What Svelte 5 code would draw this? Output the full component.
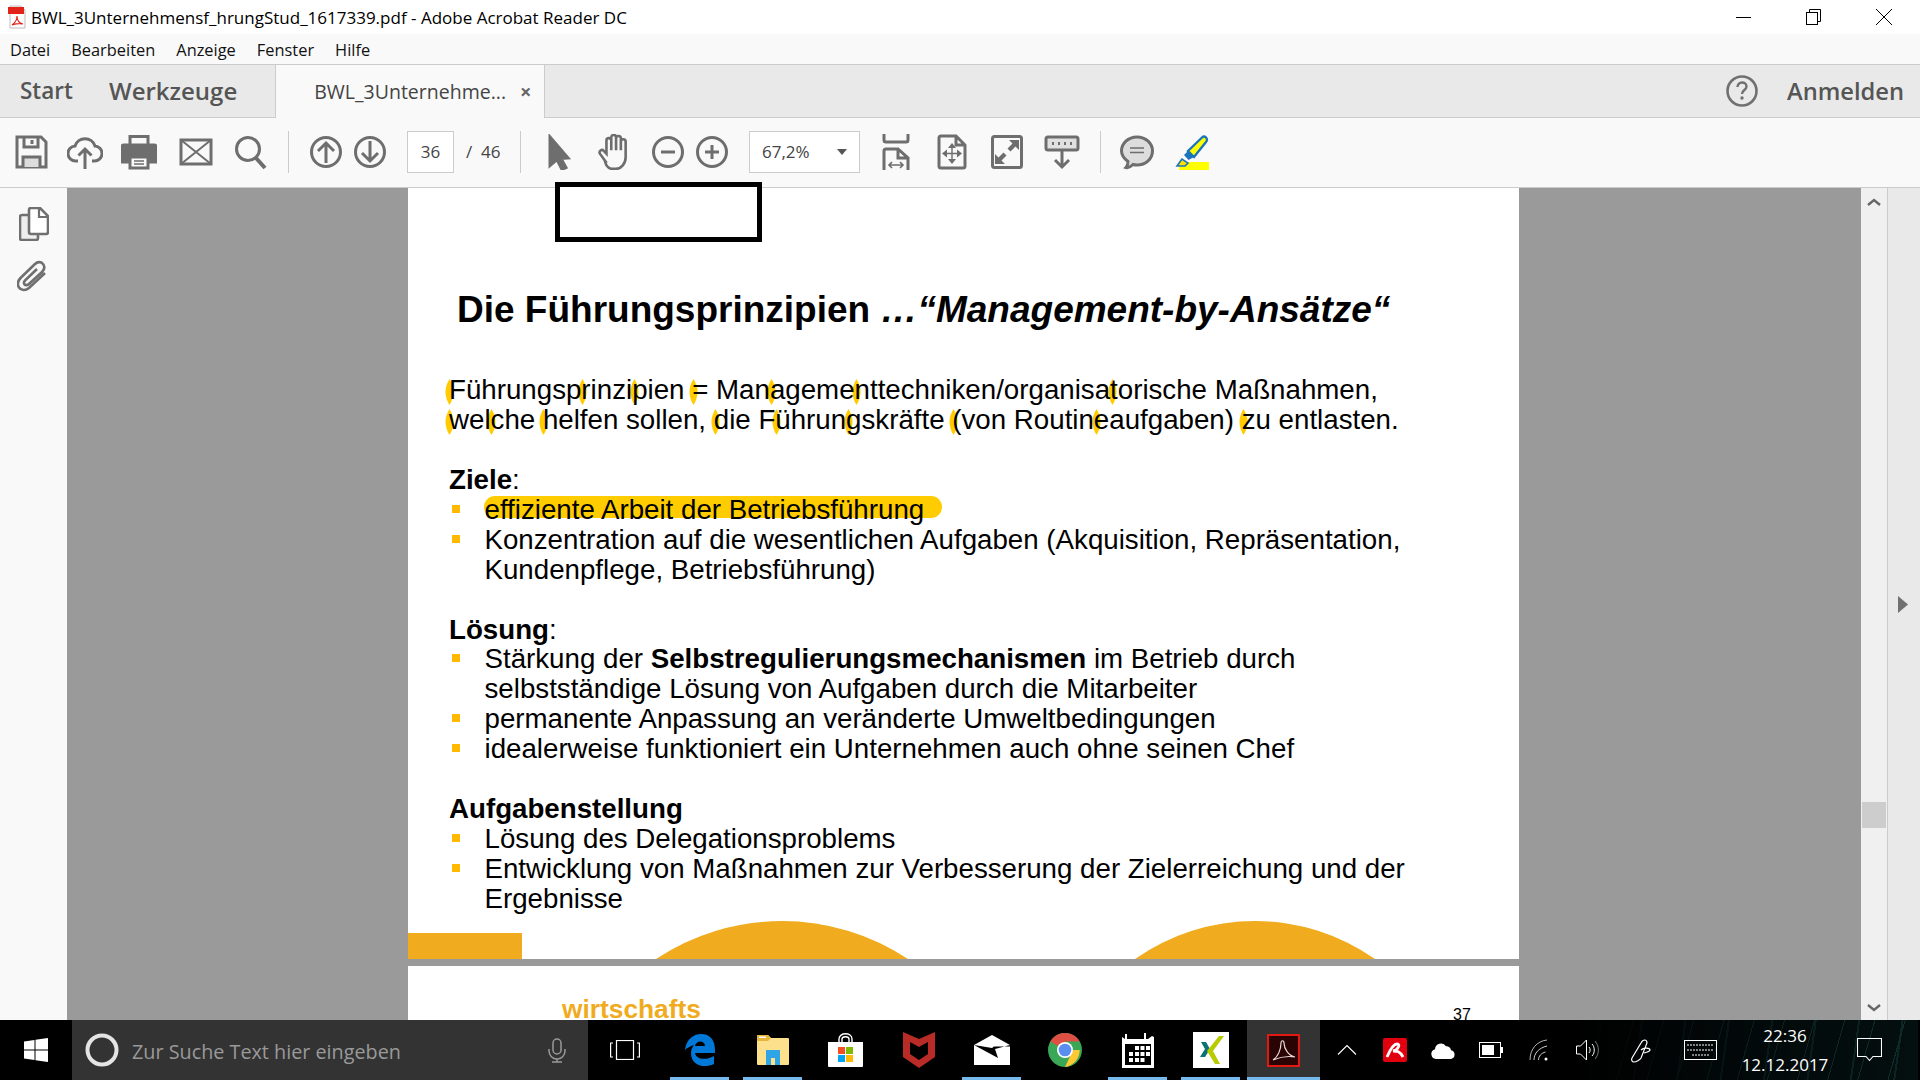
<script lang="ts">
	// yellow marks on the first page, relative to the page corner
	const lens = [
		[449, 379], [582, 379], [634, 379], [693, 379], [771, 379], [856, 379], [1112, 379],
		[449, 409], [491, 409], [543, 409], [715, 409], [776, 409], [848, 409], [953, 409], [1096, 409], [1243, 409]
	]
	const PAGE_X = 408
	const PAGE_Y = 188

	const apps = ['edge', 'folder', 'store', 'mcafee', 'mail', 'chrome', 'calendar', 'xing', 'acrobat']
	const running = ['edge', 'folder', 'mail', 'calendar', 'xing', 'acrobat']
</script>

<div class="app">
	<header class="titlebar">
		<svg class="pdficon" width="18" height="24" viewBox="0 0 18 24">
			<path d="M2 1h11l4 4v18H2z" fill="#fff" stroke="#bbb" />
			<rect x="0" y="2" width="16" height="7" fill="#e2231a" />
			<path d="M4 20c3-2 5-6 5-9 0 4 2 7 6 8-4-1-8 0-11 1z" fill="none" stroke="#e2231a" stroke-width="1.1" />
		</svg>
		<span class="title">BWL_3Unternehmensf_hrungStud_1617339.pdf - Adobe Acrobat Reader DC</span>
		<div class="winctl">
			<svg width="16" height="16" viewBox="0 0 16 16"><path d="M0 8.5h15" stroke="#000" /></svg>
			<svg width="16" height="16" viewBox="0 0 16 16" fill="none" stroke="#000"><rect x="0.5" y="3.5" width="11" height="12" fill="#fff" /><path d="M3.5 3.5v-3h11v12h-3" /></svg>
			<svg width="16" height="16" viewBox="0 0 16 16"><path d="M0 0l16 16M16 0L0 16" stroke="#000" /></svg>
		</div>
	</header>

	<nav class="menubar">
		<span>Datei</span><span>Bearbeiten</span><span>Anzeige</span><span>Fenster</span><span>Hilfe</span>
	</nav>

	<div class="tabbar">
		<span class="navtab start">Start</span>
		<span class="navtab tools">Werkzeuge</span>
		<div class="doctab">
			<span>BWL_3Unternehme...</span>
			<b>×</b>
		</div>
		<svg class="help" width="34" height="34" viewBox="0 0 34 34">
			<circle cx="17" cy="17" r="14.500" fill="none" stroke="#707070" stroke-width="2.600" />
			<path d="M12.500 13c0-6 9-6 9-.5 0 3.500-4.500 3.500-4.500 7.500" fill="none" stroke="#707070" stroke-width="2.400" />
			<circle cx="17" cy="24" r="1.700" fill="#707070" />
		</svg>
		<span class="login">Anmelden</span>
	</div>

	<div class="toolbar">
		<svg class="ic first" viewBox="0 0 36 36">
			<path d="M4 3h24l5 5v25H4z" />
			<path d="M11 3v10h14V3M19 6v4" />
			<path d="M10 33V23h17v10" fill="#ddd" />
		</svg>
		<svg class="ic" viewBox="0 0 36 36">
			<path d="M11 27H9a7.500 7.500 0 0 1-1-15 10.500 10.500 0 0 1 20 0 7.500 7.500 0 0 1-1 15h-2" />
			<path d="M18 35V15M11.500 21.500L18 15l6.500 6.500" />
		</svg>
		<svg class="ic" viewBox="0 0 36 36">
			<path class="solid" d="M3 11h30a2 2 0 0 1 2 2v15h-7v-6H8v6H1V13a2 2 0 0 1 2-2z" />
			<path d="M9 10V2.500h18V10" />
			<rect x="9" y="23" width="18" height="11" />
			<path d="M13 27h10M13 30h10" stroke-width="1.500" />
		</svg>
		<svg class="ic wide" viewBox="0 0 36 36">
			<rect x="3" y="6" width="30" height="24" />
			<path d="M3 6l30 24M33 6L3 30" stroke-width="2" />
		</svg>
		<svg class="ic" viewBox="0 0 36 36">
			<circle cx="16" cy="15" r="11.500" />
			<path d="M24 24l9 10" stroke-width="4" />
		</svg>
		<i class="sep sep1"></i>
		<svg class="ic s1" viewBox="0 0 36 36">
			<circle cx="18" cy="18" r="14.500" />
			<path d="M18 29V9M10 17l8-8 8 8" />
		</svg>
		<svg class="ic pair" viewBox="0 0 36 36">
			<circle cx="18" cy="18" r="14.500" />
			<path d="M18 7v20M10 19l8 8 8-8" />
		</svg>
		<div class="pagebox">36</div>
		<span class="total">/ &nbsp;46</span>
		<i class="sep sep2"></i>
		<svg class="ic s2" viewBox="0 0 36 36">
			<path class="solid" d="M9 3l18 21-7 .5 5 9-4 2-5-10-7 6z" />
		</svg>
		<svg class="ic s3" viewBox="1 2 30 33">
			<path d="M9 27l-5-7a2.200 2.200 0 0 1 3.500-2.600L10 20V8a2.200 2.200 0 0 1 4.400 0v9-12a2.200 2.200 0 0 1 4.400 0v12V6a2.200 2.200 0 0 1 4.400 0v11-8a2.200 2.200 0 0 1 4.400 0v14c0 6-4 11-9 11h-3c-4 0-6-3-7-7z" stroke-width="2.400" />
		</svg>
		<svg class="ic s4" viewBox="0 0 36 36">
			<circle cx="18" cy="18" r="14.500" />
			<path d="M11 18h14" />
		</svg>
		<svg class="ic pair" viewBox="0 0 36 36">
			<circle cx="18" cy="18" r="14.500" />
			<path d="M11 18h14M18 11v14" />
		</svg>
		<div class="zoombox"><span>67,2%</span><i></i></div>
		<svg class="ic s5" viewBox="0 0 36 36">
			<path d="M6 0v6a2 2 0 0 0 2 2h20a2 2 0 0 0 2-2V0" />
			<path d="M6 36V17a2 2 0 0 1 2-2h12l10 9v12M20 15v9h10" />
			<path d="M11 31h14M14 28l-3 3 3 3M22 28l3 3-3 3" stroke-width="1.600" />
		</svg>
		<svg class="ic s6" viewBox="0 0 36 36">
			<path d="M5 4a2 2 0 0 1 2-2h15l9 9v21a2 2 0 0 1-2 2H7a2 2 0 0 1-2-2zM22 2v9h9" />
			<path class="solid" stroke-width="0" d="M18 9l4 5h-8zM18 30l-4-5h8zM8 19.500l5-4v8zM28 19.500l-5-4v8z" />
			<path d="M18 14v11M13 19.500h10" stroke-width="1.400" />
		</svg>
		<svg class="ic s7" viewBox="0 0 36 36">
			<rect x="3.500" y="2.500" width="29" height="31" rx="2" />
			<path class="solid" stroke-width="0" d="M20 6h10v10l-3.500-3.500-5 5-3-3 5-5zM16 30H6V20l3.500 3.500 5-5 3 3-5 5z" />
		</svg>
		<svg class="ic s8" viewBox="0 0 36 36">
			<rect x="2" y="3" width="32" height="13" rx="2" fill="#e0e0e0" />
			<path d="M8 9.500h2M14 9.500h2M20 9.500h2M26 9.500h2" stroke-width="3" />
			<path d="M18 16v17M11 26l7 7 7-7" />
		</svg>
		<i class="sep sep3"></i>
		<svg class="ic s9" viewBox="0 0 36 36">
			<path d="M18 3c9 0 15.500 6.500 15.500 14S27 31 18 31c-1.500 0-3-.2-4-.5C12 32.500 9 34 7 33.500c1.500-1.500 2-3.500 2-6C5 24.500 2.500 21 2.500 17 2.500 9.500 9 3 18 3z" fill="#ddd" />
			<path d="M11 14h14M11 18.500h14" stroke-width="1.600" />
		</svg>
		<svg class="ic s10" viewBox="0 0 36 36">
			<rect x="6" y="28" width="30" height="9" fill="#ffff00" stroke="none" />
			<path d="M15 17L29 3.500c1.500-1.500 3-1 4 0s1.500 3 0 4.500L21 23z" fill="#ffff00" stroke="#1b75bc" stroke-width="2.400" />
			<path d="M15 17l-4 4 4.500 5 5.500-3z" fill="#1b75bc" stroke="none" />
			<path d="M9 25l-5 7h8l3-3z" fill="#ffe000" stroke="#1b75bc" stroke-width="1.600" />
		</svg>
	</div>

	<main class="main">
		<aside class="sidebar">
			<svg class="side" width="30" height="34" viewBox="0 0 30 34">
				<path d="M9 8H3a2 2 0 0 0-2 2v21a2 2 0 0 0 2 2h14a2 2 0 0 0 2-2v-4" fill="#eee" stroke="#707070" stroke-width="2.600" />
				<path d="M10 3a2 2 0 0 1 2-2h9l8 8v16a2 2 0 0 1-2 2H12a2 2 0 0 1-2-2z" fill="#fff" stroke="#707070" stroke-width="2.600" />
				<path d="M20 1v9h9" fill="none" stroke="#707070" stroke-width="2.200" />
			</svg>
			<svg class="side clip" width="30" height="32" viewBox="0 0 30 32" fill="none" stroke="#707070" stroke-width="2.600">
				<path d="M28 13L12 28c-3.500 3-8 2.500-10-.5s-1-7 2-10L18 4c2.500-2.500 6-2.500 8 0s1.500 5.500-1 8L12 24c-1.500 1.500-3.500 1.500-4.500.3S7 21.500 8.500 20L20 9" />
			</svg>
		</aside>

		<section class="viewer">
			<article class="page first-page">
				{#each lens as [x, y]}
					<i class="lens" style="left:{x - PAGE_X - 4}px;top:{y - PAGE_Y}px"></i>
				{/each}
				<i class="marker"></i>

				<h1>Die Führungsprinzipien <em>…“Management-by-Ansätze“</em></h1>

				<div class="body">
					<p>Führungsprinzipien = Managementtechniken/organisatorische Maßnahmen,<br />welche helfen sollen, die Führungskräfte (von Routineaufgaben) zu entlasten.</p>

					<p><b>Ziele</b>:</p>
					<ul>
						<li>effiziente Arbeit der Betriebsführung</li>
						<li>Konzentration auf die wesentlichen Aufgaben (Akquisition, Repräsentation, Kundenpflege, Betriebsführung)</li>
					</ul>

					<p><b>Lösung</b>:</p>
					<ul>
						<li>Stärkung der <b>Selbstregulierungsmechanismen</b> im Betrieb durch selbstständige Lösung von Aufgaben durch die Mitarbeiter</li>
						<li>permanente Anpassung an veränderte Umweltbedingungen</li>
						<li>idealerweise funktioniert ein Unternehmen auch ohne seinen Chef</li>
					</ul>

					<p><b>Aufgabenstellung</b></p>
					<ul>
						<li>Lösung des Delegationsproblems</li>
						<li>Entwicklung von Maßnahmen zur Verbesserung der Zielerreichung und der Ergebnisse</li>
					</ul>
				</div>

				<svg class="deco" width="1111" height="38" viewBox="0 0 1111 38">
					<rect x="0" y="12" width="114" height="26" fill="#f0ab1e" />
					<path d="M248 38A228 228 0 0 1 500 38z" fill="#f0ab1e" />
					<path d="M727 38A208.500 208.500 0 0 1 967 38z" fill="#f0ab1e" />
				</svg>
			</article>
			<article class="page next-page">
				<span class="brand">wirtschafts</span>
				<span class="num">37</span>
			</article>
		</section>

		<div class="selbox"></div>

		<div class="scrollbar">
			<svg width="14" height="9" viewBox="0 0 14 9"><path d="M1 7l6-5 6 5" fill="none" stroke="#666" stroke-width="2.400" /></svg>
			<i class="thumb"></i>
			<svg width="14" height="9" viewBox="0 0 14 9"><path d="M1 2l6 5 6-5" fill="none" stroke="#666" stroke-width="2.400" /></svg>
		</div>

		<aside class="rightpane">
			<svg width="10" height="17" viewBox="0 0 10 17"><path d="M0 0l10 8.500L0 17z" fill="#707070" /></svg>
		</aside>
	</main>

	<footer class="taskbar">
		<div class="startbtn">
			<svg width="24" height="24" viewBox="0 0 24 24" fill="#fff">
				<path d="M0 3.500l10.500-1.500v9.500H0zM11.500 1.800L24 0v11.500H11.500zM0 12.500h10.500V22L0 20.500zM11.500 12.500H24V24l-12.500-1.800z" />
			</svg>
		</div>
		<div class="searchbox">
			<svg width="34" height="34" viewBox="0 0 34 34"><circle cx="17" cy="17" r="14.500" fill="none" stroke="#e4e4e4" stroke-width="4" /></svg>
			<span>Zur Suche Text hier eingeben</span>
			<svg class="mic" width="18" height="25" viewBox="0 0 18 25" fill="none" stroke="#9a9a9a" stroke-width="1.500">
				<rect x="5" y="1" width="8" height="15" rx="4" />
				<path d="M1 11v2a8 8 0 0 0 16 0v-2M9 21v3M4 24h10" />
			</svg>
		</div>
		<div class="taskview">
			<svg width="30" height="20" viewBox="0 0 30 20" fill="none" stroke="#fff" stroke-width="1.200">
				<rect x="6.500" y="0.500" width="17" height="19" />
				<path d="M3 3H.6v14H3M27 3h2.400v14H27" />
			</svg>
		</div>

		{#each apps as app}
			<div class="app-slot" class:running={running.includes(app)} class:active={app === 'acrobat'}>
				{#if app === 'edge'}
					<svg width="32" height="34" viewBox="0 0 32 34">
						<path d="M1 17C2 7 9 1 17 1c9 0 14 6 14 16v3H11c1 6 10 8 19 3v8c-11 5-23 1-23-11 0-3 1-6 3-8-4 1-7 3-9 5zM11 13h10c0-6-9-6-10 0z" fill="#0078d7" fill-rule="evenodd" />
					</svg>
				{:else if app === 'folder'}
					<svg width="32" height="32" viewBox="0 0 32 32">
						<path d="M0 2a1 1 0 0 1 1-1h10l3 3h17a1 1 0 0 1 1 1v25a1 1 0 0 1-1 1H1a1 1 0 0 1-1-1z" fill="#fde08c" />
						<path d="M0 2a1 1 0 0 1 1-1h10l3 3-3 3H0z" fill="#e8b53c" />
						<path d="M2 2.500h7v1.500H2z" fill="#fff" />
						<path d="M9 31V18h14v13h-5v-7h-4v7z" fill="#2fa4e7" />
						<path d="M9 16h14v3H9z" fill="#2fa4e7" />
					</svg>
				{:else if app === 'store'}
					<svg width="35" height="34" viewBox="0 0 35 34">
						<path d="M11 11V6c0-7 13-7 13 0v5M14 11V6c0-3 7-3 7 0v5" fill="none" stroke="#fff" stroke-width="1.400" />
						<path d="M0 9h35v24a1 1 0 0 1-1 1H1a1 1 0 0 1-1-1z" fill="#fff" />
						<rect x="10" y="14" width="7" height="7" fill="#f25022" />
						<rect x="18" y="14" width="7" height="7" fill="#7fba00" />
						<rect x="10" y="22" width="7" height="7" fill="#00a4ef" />
						<rect x="18" y="22" width="7" height="7" fill="#ffb900" />
					</svg>
				{:else if app === 'mcafee'}
					<svg width="32" height="36" viewBox="0 0 32 36">
						<path d="M0 0l16 7 16-7v25L16 36 0 25zM7 10v12l9 6 9-6V10l-9 5z" fill="#b92b27" fill-rule="evenodd" />
					</svg>
				{:else if app === 'mail'}
					<svg width="36" height="30" viewBox="0 0 36 30">
						<path d="M0 10L18 0l18 10v20H0z" fill="#fff" />
						<path d="M0 10l24 13-3-9 15-4v1.500L20 11.500 18 13z" fill="#000" />
					</svg>
				{:else if app === 'chrome'}
					<svg width="34" height="34" viewBox="0 0 34 34">
						<circle cx="17" cy="17" r="17" fill="#3aa757" />
						<path d="M17 17L2.300 8.500A17 17 0 0 1 31.700 8.500H17z" fill="#df4f43" />
						<path d="M17 17h14.700A17 17 0 0 1 17 34l8-17z" fill="#fcc934" />
						<circle cx="17" cy="17" r="8" fill="#fff" />
						<circle cx="17" cy="17" r="6.300" fill="#5a8df0" />
					</svg>
				{:else if app === 'calendar'}
					<svg width="32" height="36" viewBox="0 0 32 36">
						<path d="M0 5l3 2V2h2v5h17V1h2v6h2l4-3 2 1v31H0z" fill="#fff" />
						<rect x="3" y="12" width="26" height="21" fill="#000" />
						<g fill="#fff">
							<rect x="13" y="14" width="4" height="4" /><rect x="18.500" y="14" width="4" height="4" /><rect x="24" y="14" width="4" height="4" />
							<rect x="7" y="20" width="4" height="4" /><rect x="13" y="20" width="4" height="4" /><rect x="18.500" y="20" width="4" height="4" /><rect x="24" y="20" width="4" height="4" />
							<rect x="7" y="26" width="4" height="4" /><rect x="13" y="26" width="4" height="4" /><rect x="18.500" y="26" width="4" height="4" />
						</g>
					</svg>
				{:else if app === 'xing'}
					<svg width="36" height="36" viewBox="0 0 36 36">
						<rect width="36" height="36" fill="#fff" />
						<path d="M8 10h5l4 7-5 8H7l5-8z" fill="#0a7272" />
						<path d="M26 4h5L20 19l7 13h-5l-8-13z" fill="#b7cb00" />
					</svg>
				{:else}
					<svg width="33" height="33" viewBox="0 0 33 33">
						<rect x="1" y="1" width="31" height="31" fill="#2a0404" stroke="#e01a10" stroke-width="2" />
						<path d="M6 26c5-3 8-11 8-17 0-3 3-3 3 0 0 6 5 13 11 14-6-1-15 0-22 3z" fill="none" stroke="#e8d8d8" stroke-width="1.200" />
					</svg>
				{/if}
			</div>
		{/each}

		<div class="tray">
			<span class="slot">
				<svg width="20" height="10" viewBox="0 0 20 10"><path d="M1 9.500l9-9 9 9" fill="none" stroke="#fff" stroke-width="1.100" /></svg>
			</span>
			<span class="slot">
				<svg width="24" height="24" viewBox="0 0 24 24">
					<rect width="24" height="24" rx="2" fill="#e2000f" />
					<path d="M4 19C7 12 10 6 14 6c4 0 1 6-4 7 4 0 7 0 10 6" fill="none" stroke="#fff" stroke-width="2.800" />
				</svg>
			</span>
			<span class="slot">
				<svg width="25" height="17" viewBox="0 0 25 17" fill="#fff">
					<path d="M5 17a5 5 0 0 1-1-9.800 6 6 0 0 1 11-3 4.500 4.500 0 0 1 5 4A4.500 4.500 0 0 1 20 17z" />
				</svg>
			</span>
			<span class="slot">
				<svg width="24" height="16" viewBox="0 0 24 16">
					<rect x="0.500" y="0.500" width="21" height="15" fill="none" stroke="#fff" />
					<rect x="3" y="3" width="12" height="10" fill="#fff" />
					<rect x="22" y="5" width="2" height="6" fill="#fff" />
				</svg>
			</span>
			<span class="slot">
				<svg width="20" height="22" viewBox="0 0 20 22" fill="none" stroke="#fff">
					<path d="M1 21C1 10 8 2 18 1" opacity=".7" />
					<path d="M5 21c0-7 5-12 13-14" opacity=".8" />
					<path d="M9.500 21c0-4 3-7 7-8" opacity=".8" />
					<circle cx="17" cy="20" r="1.500" fill="#fff" stroke="none" />
				</svg>
			</span>
			<span class="slot">
				<svg width="23" height="22" viewBox="0 0 23 22" fill="none" stroke="#fff">
					<path d="M.5 7h4l6-6v20l-6-6h-4z" />
					<path d="M13 8c1.500 1.500 1.500 4.500 0 6M16 5c3 3 3 9 0 12" />
					<path d="M19 2c4.500 5 4.500 13 0 18" opacity=".45" />
				</svg>
			</span>
			<span class="slot pen">
				<svg width="22" height="25" viewBox="0 0 22 25" fill="none" stroke="#fff" stroke-width="1.200">
					<path d="M4 24C2 24 1 22 2 20l9-15c2-4 6-4 6 0l-6 15c-1 2-5 4-7 4zM11 12c3-3 9-2 9 0s-4 2-6 3" />
				</svg>
			</span>
			<span class="slot kbd">
				<svg width="33" height="20" viewBox="0 0 33 20" fill="none" stroke="#fff">
					<rect x="0.500" y="0.500" width="32" height="19" />
					<path d="M3 5h27M3 10h27M8 15h17" stroke-dasharray="2 1" />
				</svg>
			</span>
			<div class="clock">
				<span>22:36</span>
				<span>12.12.2017</span>
			</div>
			<span class="slot notif">
				<svg width="25" height="25" viewBox="0 0 25 25">
					<path d="M.5.500h24v18H16l-3.500 4-3.500-4H.5z" fill="none" stroke="#fff" stroke-width="1.100" />
				</svg>
			</span>
		</div>
	</footer>
</div>

<style>
	:global(body) {
		margin: 0;
		background: #fff;
	}

	.app {
		width: 1920px;
		height: 1080px;
		display: flex;
		flex-direction: column;
		overflow: hidden;
		font-family: "Open Sans", sans-serif;
	}

	i {
		display: block;
	}

	.titlebar {
		height: 34px;
		flex: none;
		display: flex;
		align-items: center;
		background: #fff;
	}

	.pdficon {
		margin-left: 8px;
	}

	.title {
		margin-left: 5px;
		font-size: 17px;
		color: #000;
		white-space: nowrap;
	}

	.winctl {
		margin-left: auto;
		display: flex;
		gap: 54px;
		padding-right: 28px;
	}

	.menubar {
		height: 30px;
		flex: none;
		display: flex;
		align-items: center;
		gap: 21px;
		padding-left: 10px;
		background: #f9f9f9;
		border-bottom: 1px solid #ccc;
		font-size: 16.400px;
		color: #111;
	}

	.tabbar {
		height: 52px;
		flex: none;
		display: flex;
		align-items: center;
		background: #e9e9e9;
		border-bottom: 1px solid #ccc;
		color: #555;
	}

	.navtab {
		font-weight: 600;
		margin-bottom: 2px;
	}

	.start {
		margin-left: 20px;
		font-size: 22.500px;
	}

	.tools {
		margin-left: 36px;
		font-size: 24px;
	}

	.doctab {
		margin-left: 38px;
		width: 270px;
		height: 53px;
		margin-bottom: -1px;
		box-sizing: border-box;
		display: flex;
		align-items: center;
		padding-left: 38px;
		background: #f9f9f9;
		border-left: 1px solid #ccc;
		border-right: 1px solid #ccc;
		font-size: 19.500px;
		color: #444;
	}

	.doctab b {
		margin-left: 14px;
		font-size: 20px;
		color: #666;
	}

	.help {
		margin-left: auto;
	}

	.login {
		margin-left: 28px;
		margin-right: 16px;
		font-size: 23.700px;
		font-weight: 600;
	}

	.toolbar {
		height: 70px;
		box-sizing: border-box;
		padding-bottom: 2px;
		flex: none;
		display: flex;
		align-items: center;
		background: #f9f9f9;
		border-bottom: 1px solid #ccc;
	}

	.ic {
		width: 36px;
		height: 36px;
		flex: none;
		margin-left: 18px;
		fill: none;
		stroke: #6e6e6e;
		stroke-width: 3;
	}

	.ic .solid {
		fill: #6e6e6e;
	}

	.ic.first {
		margin-left: 13px;
	}

	.ic.wide {
		margin-left: 21px;
	}

	.sep {
		width: 1px;
		height: 42px;
		background: #ccc;
		flex: none;
	}

	.sep1 {
		margin-left: 20px;
	}

	.ic.s1 {
		margin-left: 19px;
	}

	.ic.pair {
		margin-left: 8px;
	}

	.pagebox {
		width: 47px;
		height: 42px;
		box-sizing: border-box;
		margin-left: 19px;
		border: 1px solid #ccc;
		background: #fff;
		display: flex;
		align-items: center;
		justify-content: center;
		font-size: 17px;
		color: #444;
	}

	.total {
		margin-left: 12px;
		width: 54px;
		font-size: 17px;
		color: #444;
		white-space: nowrap;
	}

	.ic.s2 {
		margin-left: 20px;
	}

	.ic.s3 {
		margin-left: 18px;
	}

	.ic.s4 {
		margin-left: 19px;
	}

	.zoombox {
		width: 111px;
		height: 42px;
		box-sizing: border-box;
		margin-left: 19px;
		padding: 0 12px;
		border: 1px solid #ccc;
		background: #fff;
		display: flex;
		align-items: center;
		justify-content: space-between;
		font-size: 17px;
		color: #444;
	}

	.zoombox i {
		width: 0;
		height: 0;
		border-left: 5px solid transparent;
		border-right: 5px solid transparent;
		border-top: 6px solid #555;
	}

	.ic.s5 {
		margin-left: 18px;
	}

	.ic.s6 {
		margin-left: 20px;
	}

	.ic.s7 {
		margin-left: 19px;
	}

	.ic.s8 {
		margin-left: 19px;
	}

	.sep3 {
		margin-left: 20px;
	}

	.ic.s9 {
		margin-left: 18px;
	}

	.ic.s10 {
		margin-left: 18px;
	}

	.main {
		flex: 1;
		min-height: 0;
		display: flex;
		position: relative;
	}

	.sidebar {
		width: 67px;
		flex: none;
		box-sizing: border-box;
		display: flex;
		flex-direction: column;
		background: #f9f9f9;
		padding: 19px 0 0 19px;
	}

	.side.clip {
		margin-top: 19px;
		margin-left: -2px;
	}

	.viewer {
		flex: 1;
		background: #9a9a9a;
		display: flex;
		flex-direction: column;
		align-items: flex-start;
		gap: 7px;
		overflow: hidden;
	}

	.page {
		width: 1111px;
		margin-left: 341px;
		flex: none;
		background: #fff;
		position: relative;
		color: #000;
		font-family: "Liberation Sans", Arial, sans-serif;
	}

	.first-page {
		height: 771px;
		box-sizing: border-box;
		padding-top: 100px;
		display: flex;
		flex-direction: column;
	}

	.lens {
		position: absolute;
		width: 9px;
		height: 26px;
		background: #ffcc00;
		clip-path: path("M4.500 0Q-3.500 13 4.500 26Q12.500 13 4.500 0z");
	}

	.marker {
		position: absolute;
		left: 76px;
		top: 308px;
		width: 458px;
		height: 22px;
		border-radius: 11px;
		background: #ffcc00;
	}

	h1 {
		position: relative;
		margin: 0 0 43px;
		padding-left: 49px;
		font-size: 37px;
		line-height: 44px;
		font-weight: 700;
		white-space: nowrap;
	}

	.body {
		position: relative;
		padding-left: 41px;
		font-size: 27.700px;
		line-height: 29.940px;
	}

	.body p {
		margin: 0;
	}

	.body ul {
		list-style: none;
		margin: 0 0 29.940px;
		padding: 0 80px 0 35.500px;
	}

	.body ul:last-child {
		margin-bottom: 0;
	}

	.body p:first-child {
		margin-bottom: 29.940px;
	}

	.body li {
		position: relative;
	}

	.body li::before {
		content: "";
		position: absolute;
		left: -33px;
		top: 10px;
		width: 8px;
		height: 8px;
		background: #ffb900;
	}

	.deco {
		display: block;
		flex: none;
		margin-top: auto;
	}

	.next-page {
		height: 200px;
	}

	.brand {
		position: absolute;
		left: 154px;
		top: 28px;
		font-size: 26.300px;
		font-weight: 700;
		line-height: 30px;
		color: #f0ab1e;
	}

	.num {
		position: absolute;
		left: 1045px;
		top: 39px;
		font-size: 16px;
		line-height: 20px;
	}

	.selbox {
		position: absolute;
		left: 555px;
		top: -6px;
		width: 207px;
		height: 60px;
		box-sizing: border-box;
		border: 5px solid #000;
		background: #fff;
	}

	.scrollbar {
		width: 26px;
		flex: none;
		box-sizing: border-box;
		display: flex;
		flex-direction: column;
		align-items: center;
		padding: 10px 0 8px;
		background: #f0f0f0;
	}

	.thumb {
		width: 24px;
		height: 26px;
		background: #cdcdcd;
		margin-top: 595px;
		margin-bottom: auto;
	}

	.rightpane {
		width: 33px;
		flex: none;
		box-sizing: border-box;
		background: #e9e9e9;
		border-left: 1px solid #ccc;
		display: flex;
		align-items: center;
		padding-left: 10px;
	}

	.taskbar {
		height: 60px;
		flex: none;
		display: flex;
		align-items: stretch;
		background: #000;
		color: #fff;
	}

	.startbtn {
		width: 72px;
		flex: none;
		display: flex;
		align-items: center;
		justify-content: center;
	}

	.searchbox {
		width: 516px;
		flex: none;
		box-sizing: border-box;
		display: flex;
		align-items: center;
		padding: 0 22px 0 13px;
		background: #333;
		color: #999;
		font-size: 19.800px;
	}

	.searchbox span {
		margin-left: 13px;
		margin-top: 2px;
		white-space: nowrap;
	}

	.mic {
		margin-left: auto;
	}

	.taskview {
		width: 73px;
		margin-right: 2px;
		flex: none;
		display: flex;
		align-items: center;
		justify-content: center;
	}

	.app-slot {
		width: 73px;
		flex: none;
		position: relative;
		display: flex;
		align-items: center;
		justify-content: center;
	}

	.app-slot.running::after {
		content: "";
		position: absolute;
		left: 7px;
		right: 7px;
		bottom: 0;
		height: 3px;
		background: #76b9ed;
	}

	.app-slot.active {
		background: #333;
	}

	.app-slot.active::after {
		left: 0;
		right: 0;
	}

	/* wallpaper shows through the right part of the taskbar */
	.tray {
		flex: 1;
		display: flex;
		align-items: center;
		padding-left: 3px;
		font-size: 17px;
		border-right: 2px solid transparent;
		background:
			linear-gradient(90deg, #000 42%, rgba(0, 0, 0, 0.35) 75%, rgba(0, 0, 0, 0) 100%),
			repeating-linear-gradient(106deg, transparent 0 11px, #12302f 11px 12px, transparent 12px 29px),
			repeating-linear-gradient(98deg, transparent 0 17px, #0c2627 17px 19px, transparent 19px 43px),
			#040f10;
	}

	.slot {
		width: 48px;
		flex: none;
		display: flex;
		align-items: center;
		justify-content: center;
	}

	.pen {
		margin-left: 6px;
	}

	.kbd {
		margin-left: 11px;
	}

	.clock {
		width: 90px;
		margin-left: 16px;
		flex: none;
		display: flex;
		flex-direction: column;
		align-items: center;
		line-height: 29px;
		white-space: nowrap;
	}

	.notif {
		margin-left: 15px;
	}
</style>
